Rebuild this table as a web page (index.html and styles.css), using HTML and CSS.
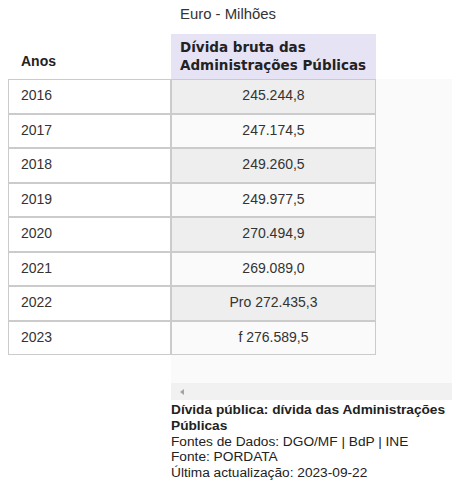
FILE: index.html
```html
<!DOCTYPE html>
<html lang="pt">
<head>
<meta charset="utf-8">
<link rel="stylesheet" href="styles.css">
</head>
<body>
<div class="wrap">
  <div class="fixed">
    <div class="anos-head">Anos</div>
    <div class="cell">2016</div>
    <div class="cell">2017</div>
    <div class="cell">2018</div>
    <div class="cell">2019</div>
    <div class="cell">2020</div>
    <div class="cell">2021</div>
    <div class="cell">2022</div>
    <div class="cell">2023</div>
  </div>
  <div class="scroll">
    <div class="unit">Euro - Milhões</div>
    <div class="col-head">Dívida bruta das Administrações Públicas</div>
    <div class="body">
      <div class="vals">
        <div class="cell val odd">245.244,8</div>
        <div class="cell val">247.174,5</div>
        <div class="cell val odd">249.260,5</div>
        <div class="cell val">249.977,5</div>
        <div class="cell val odd">270.494,9</div>
        <div class="cell val">269.089,0</div>
        <div class="cell val odd">Pro 272.435,3</div>
        <div class="cell val">f 276.589,5</div>
      </div>
    </div>
    <div class="track"><span class="arrow"></span></div>
    <div class="notes">
      <div class="title">Dívida pública: dívida das Administrações Públicas</div>
      <div>Fontes de Dados: DGO/MF | BdP | INE</div>
      <div>Fonte: PORDATA</div>
      <div>Última actualização: 2023-09-22</div>
    </div>
  </div>
</div>
</body>
</html>
```

FILE: styles.css
```css
html, body {
  margin: 0;
  padding: 0;
  background: #fff;
}
body {
  font-family: "Liberation Sans", Arial, sans-serif;
  font-size: 14px;
  color: #333;
}
.wrap {
  display: flex;
  padding-left: 8px;
}
.fixed {
  width: 163px;
  padding-top: 34px;
  display: flex;
  flex-direction: column;
}
.anos-head {
  height: 45px;
  box-sizing: border-box;
  padding: 19px 0 0 13px;
  font-weight: bold;
  line-height: 16px;
  color: #222;
}
.cell {
  box-sizing: border-box;
  height: 34.5px;
  border: 1px solid #cbcbcb;
  padding: 7px 12px 0;
  line-height: 16px;
  background: #fff;
}
.scroll {
  width: 281px;
  display: flex;
  flex-direction: column;
}
.unit {
  height: 34px;
  box-sizing: border-box;
  padding: 6px 0 0 9px;
  font-size: 14.9px;
  line-height: 17px;
}
.col-head {
  width: 205px;
  height: 45px;
  box-sizing: border-box;
  background: #e6e3f5;
  padding: 4px 9px 0;
  font-family: "DejaVu Sans", Verdana, sans-serif;
  font-size: 13.5px;
  font-weight: bold;
  line-height: 18px;
  color: #222;
}
.body {
  background: #fafafa;
  height: 304px;
}
.vals {
  width: 205px;
}
.val {
  text-align: center;
  padding-left: 0;
  padding-right: 0;
  background: #fafafa;
}
.val.odd {
  background: #eeeeee;
}
.track {
  height: 17px;
  background: #f1f1f1;
  display: flex;
  align-items: center;
  padding-left: 9px;
}
.arrow {
  width: 0;
  height: 0;
  border-top: 3.5px solid transparent;
  border-bottom: 3.5px solid transparent;
  border-right: 4px solid #a3a3a3;
}
.notes {
  padding-top: 2px;
  font-size: 13.7px;
  line-height: 15.75px;
  color: #222;
}
.title {
  font-weight: bold;
}
```
